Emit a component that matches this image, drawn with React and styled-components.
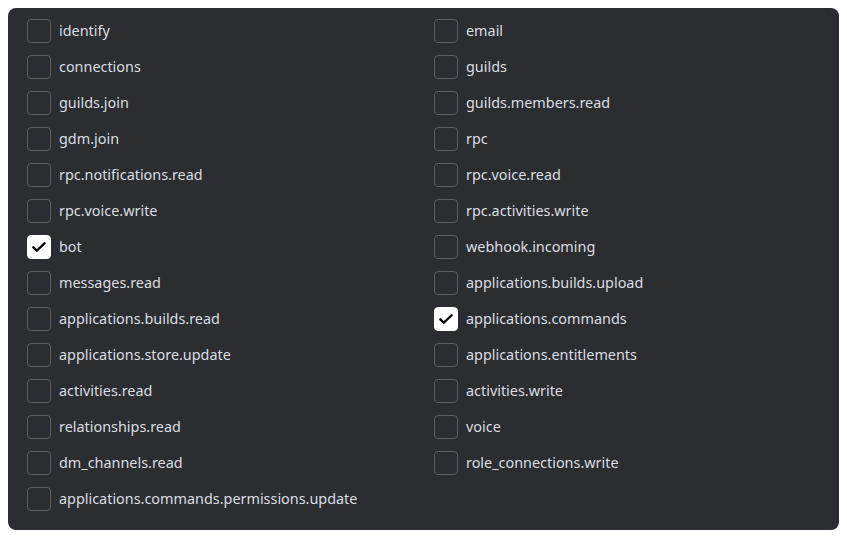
import styled, { createGlobalStyle } from 'styled-components';

const scopes = [
  ['identify', false], ['email', false],
  ['connections', false], ['guilds', false],
  ['guilds.join', false], ['guilds.members.read', false],
  ['gdm.join', false], ['rpc', false],
  ['rpc.notifications.read', false], ['rpc.voice.read', false],
  ['rpc.voice.write', false], ['rpc.activities.write', false],
  ['bot', true], ['webhook.incoming', false],
  ['messages.read', false], ['applications.builds.upload', false],
  ['applications.builds.read', false], ['applications.commands', true],
  ['applications.store.update', false], ['applications.entitlements', false],
  ['activities.read', false], ['activities.write', false],
  ['relationships.read', false], ['voice', false],
  ['dm_channels.read', false], ['role_connections.write', false],
  ['applications.commands.permissions.update', false],
];

export default function App() {
  return (
    <>
      <GlobalStyle />
      <Panel>
        {scopes.map(([name, checked]) => (
          <Scope key={name}>
            <Box checked={checked}>
              {checked && (
                <svg width="18" height="18" viewBox="0 0 24 24" fill="none">
                  <path d="M4.5 12.5l4.5 4.5L19.5 7" stroke="#000" strokeWidth="3.2" strokeLinecap="round" strokeLinejoin="round" />
                </svg>
              )}
            </Box>
            <Label>{name}</Label>
          </Scope>
        ))}
      </Panel>
    </>
  );
}

const GlobalStyle = createGlobalStyle`
body {
  margin: 0;
  background: #ffffff;
  font-family: "Noto Sans", "Open Sans", sans-serif;
}
`;

const Panel = styled.div`
margin: 8px;
width: 831px;
box-sizing: border-box;
padding: 11px 19px 19px;
background: #2b2d31;
border-radius: 8px;
display: grid;
grid-template-columns: 407px 1fr;
row-gap: 12px;
`;

const Scope = styled.label`
display: flex;
align-items: center;
height: 24px;
gap: 8px;
cursor: pointer;
`;

const Box = styled.span`
width: 24px;
height: 24px;
box-sizing: border-box;
border-radius: 4px;
border: 1px solid ${p => (p.checked ? '#ffffff' : '#5c5e66')};
background: ${p => (p.checked ? '#ffffff' : 'transparent')};
display: flex;
align-items: center;
justify-content: center;
flex-shrink: 0;
`;

const Label = styled.span`
color: #dbdee1;
font-size: 14.4px;
line-height: 20px;
margin-top: -1px;
`;
